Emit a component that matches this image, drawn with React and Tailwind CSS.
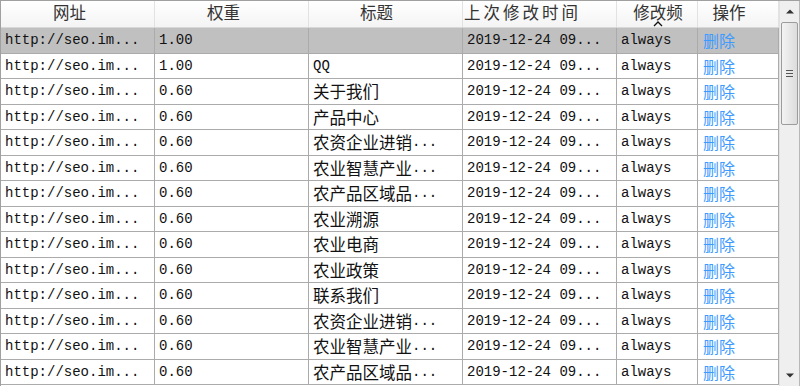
import React from "react";

const titles = ["", "QQ", "关于我们", "产品中心", "农资企业进销...", "农业智慧产业...", "农产品区域品...", "农业溯源", "农业电商", "农业政策", "联系我们", "农资企业进销...", "农业智慧产业...", "农产品区域品..."];
const weights = ["1.00", "1.00", "0.60", "0.60", "0.60", "0.60", "0.60", "0.60", "0.60", "0.60", "0.60", "0.60", "0.60", "0.60"];

function Runs({ text }) {
  const parts = [];
  let cur = "";
  let curCjk = null;
  for (const ch of text) {
    const cjk = /[\u3000-\u9fff\uff00-\uffef]/.test(ch);
    if (curCjk === null || cjk === curCjk) {
      cur += ch;
      curCjk = cjk;
    } else {
      parts.push([cur, curCjk]);
      cur = ch;
      curCjk = cjk;
    }
  }
  if (cur) parts.push([cur, curCjk]);
  return (
    <>
      {parts.map(([t, cjk], i) =>
        cjk ? (
          <span key={i} className="text-[16.5px] font-['Noto_Sans_CJK_SC',sans-serif]">{t}</span>
        ) : (
          <span key={i} className="text-[14px] font-['Liberation_Mono',monospace]">{t}</span>
        )
      )}
    </>
  );
}

const widths = ["w-[154px]", "w-[154px]", "w-[154px]", "w-[154px]", "w-[81px]", "w-[81px]"];
const headers = [
  ["网址", "pr-[16px]"],
  ["权重", "pr-[16px]"],
  ["标题", "pr-[18px]"],
  ["上次修改时间", "pr-[34px] tracking-[3px]"],
  ["修改频", "pl-[2px]"],
  ["操作", "pr-[18px]"],
];

export default function App() {
  return (
    <div className="w-[800px] h-[386px] overflow-hidden flex bg-white border-t border-l border-[#a0a0a0] text-[#111]">
      <div className="w-[778px] flex flex-col">
        <div className="flex h-[27px] shrink-0 border-b border-[#d8d8d8] bg-gradient-to-b from-white to-[#f4f4f4]">
          {headers.map(([h, cls], i) => (
            <div key={i} className={`${widths[i]} ${cls} relative shrink-0 border-r border-[#e2e2e2] flex items-center justify-center text-[16.5px] text-[#333] font-['Noto_Sans_CJK_SC',sans-serif] leading-none pb-[3px]`}>
              <span className="relative z-0">{h}</span>
              {i === 4 && (
                <svg className="absolute z-10 left-[36px] top-[20px]" width="10" height="6" viewBox="0 0 10 6">
                  <path d="M1 5 L5 1 L9 5" fill="none" stroke="#111" strokeWidth="1.3" />
                </svg>
              )}
            </div>
          ))}
        </div>
        {titles.map((t, r) => (
          <div key={r} className={`flex h-[25.5px] shrink-0 border-b border-[#ababab] ${r === 0 ? "bg-[#c0c0c0]" : "bg-white"}`}>
            <div className={`${widths[0]} shrink-0 border-r border-[#ababab] flex items-center pl-[4px] leading-none whitespace-nowrap overflow-hidden`}>
              <Runs text="http://seo.im..." />
            </div>
            <div className={`${widths[1]} shrink-0 border-r border-[#ababab] flex items-center pl-[4px] leading-none`}>
              <Runs text={weights[r]} />
            </div>
            <div className={`${widths[2]} shrink-0 border-r border-[#ababab] flex items-center pl-[4px] leading-none whitespace-nowrap overflow-hidden`}>
              <Runs text={t} />
            </div>
            <div className={`${widths[3]} shrink-0 border-r border-[#ababab] flex items-center pl-[4px] leading-none whitespace-nowrap`}>
              <Runs text="2019-12-24 09..." />
            </div>
            <div className={`${widths[4]} shrink-0 border-r border-[#ababab] flex items-center pl-[4px] leading-none`}>
              <Runs text="always" />
            </div>
            <div className={`${widths[5]} shrink-0 border-r border-[#ababab] flex items-center pl-[5px] leading-none text-[16px] text-[#3d9bff] font-['Noto_Sans_CJK_SC',sans-serif]`}>
              删除
            </div>
          </div>
        ))}
      </div>
      <div className="w-[21px] shrink-0 h-full bg-[#efefef] border-l border-[#e2e2e2] border-r border-r-[#b8b8b8] flex flex-col items-center">
        <div className="h-[21px] w-full flex items-center justify-center">
          <svg width="8" height="5" viewBox="0 0 8 5"><path d="M0 4.5 L4 0.5 L8 4.5 Z" fill="#333" /></svg>
        </div>
        <div className="w-[17px] h-[103px] rounded-[2px] border border-[#9c9c9c] bg-gradient-to-r from-[#f3f3f3] to-[#dcdcdc] flex flex-col items-center justify-center gap-[2px]">
          <div className="w-[7px] h-px bg-[#555]" />
          <div className="w-[7px] h-px bg-[#555]" />
          <div className="w-[7px] h-px bg-[#555]" />
        </div>
        <div className="flex-1" />
        <div className="h-[21px] w-full flex items-center justify-center">
          <svg width="8" height="5" viewBox="0 0 8 5"><path d="M0 0.5 L4 4.5 L8 0.5 Z" fill="#333" /></svg>
        </div>
      </div>
    </div>
  );
}
